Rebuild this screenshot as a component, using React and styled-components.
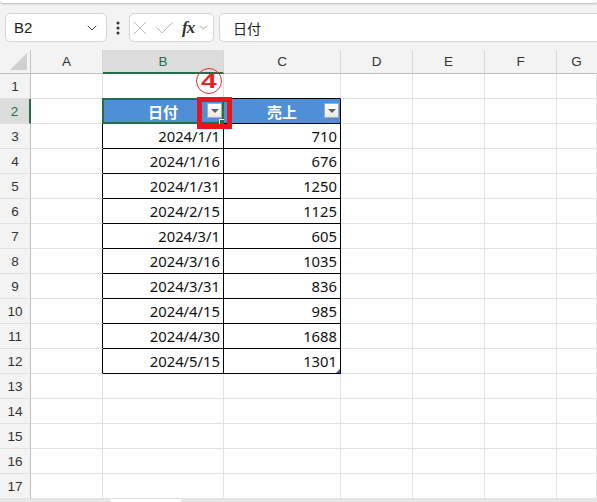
import React from 'react';
import styled, { createGlobalStyle } from 'styled-components';
import { ChevronDown, X, Check } from 'lucide-react';

const GlobalStyle = createGlobalStyle`
  html, body {
    margin: 0;
    padding: 0;
    background: #f3f3f3;
  }
  body {
    font-family: "Liberation Sans", Arial, sans-serif;
    overflow: hidden;
  }
`;

const GREEN = '#1f7145';
const GRID = '#e1e1e1';
const BLACK = '#000';

const data = [
  ['2024/1/1', 710],
  ['2024/1/16', 676],
  ['2024/1/31', 1250],
  ['2024/2/15', 1125],
  ['2024/3/1', 605],
  ['2024/3/16', 1035],
  ['2024/3/31', 836],
  ['2024/4/15', 985],
  ['2024/4/30', 1688],
  ['2024/5/15', 1301]
];

const letters = ['A', 'B', 'C', 'D', 'E', 'F', 'G'];

const Page = styled.div`
  position: relative;
  width: 597px;
  height: 502px;
  overflow: hidden;
  background: #f3f3f3;
`;

const Ribbon = styled.div`
  height: 3px;
  background: #fff;
  border-radius: 0 0 7px 7px;
  box-shadow: 0 1px 2px rgba(0, 0, 0, 0.25);
`;

const FormulaBar = styled.div`
  display: flex;
  align-items: center;
  height: 29px;
  padding: 10px 0 0 5px;
  margin-bottom: 8px;
`;

const Box = styled.div`
  display: flex;
  align-items: center;
  box-sizing: border-box;
  height: 29px;
  background: #fff;
  border: 1px solid #d4d4d4;
  width: ${p => p.$w || 'auto'};
  flex: ${p => (p.$grow ? '1' : 'none')};
  padding: ${p => p.$pad || '0'};
  margin-right: ${p => p.$mr || '0'};
  border-right: ${p => (p.$open ? 'none' : '1px solid #d4d4d4')};
  border-radius: ${p => (p.$open ? '5px 0 0 5px' : '5px')};
`;

const NameText = styled.span`
  flex: 1;
  font-size: 15px;
  color: #222;
`;

const Dots = styled.div`
  width: 22px;
  display: flex;
  justify-content: center;
`;

const Fx = styled.span`
  font-family: "Liberation Serif", "Times New Roman", serif;
  font-style: italic;
  font-weight: bold;
  font-size: 17px;
  color: #333;
  margin-left: 5px;
  letter-spacing: -1px;
`;

const FormulaText = styled.span`
  font-family: "Noto Sans CJK JP", sans-serif;
  font-size: 14px;
  color: #222;
`;

const Sheet = styled.div`
  display: grid;
  grid-template-columns: 31px 72px 121px 117px 72px 72px 72px 1fr;
  grid-auto-rows: 25px;
  grid-template-rows: 24px;
`;

const Corner = styled.div`
  box-sizing: border-box;
  border-right: 1px solid #c4c4c4;
  border-bottom: 1px solid #bdbdbd;
  display: flex;
  align-items: flex-end;
  justify-content: flex-end;
  padding: 0 3px 3px 0;
`;

const ColHead = styled.div`
  box-sizing: border-box;
  display: flex;
  align-items: center;
  justify-content: center;
  font-size: 13.5px;
  color: ${p => (p.$sel ? GREEN : '#333')};
  background: ${p => (p.$sel ? '#dcdcdc' : '#f3f3f3')};
  border-right: 1px solid ${p => (p.$last ? 'transparent' : '#d8d8d8')};
  border-bottom: ${p => (p.$sel ? `2px solid ${GREEN}` : '1px solid #bdbdbd')};
  padding-top: ${p => (p.$sel ? '1px' : '0')};
`;

const RowHead = styled.div`
  box-sizing: border-box;
  display: flex;
  align-items: center;
  justify-content: center;
  font-size: 13.5px;
  color: ${p => (p.$sel ? GREEN : '#333')};
  background: ${p => (p.$sel ? '#dcdcdc' : '#f3f3f3')};
  border-bottom: 1px solid #e1e1e1;
  border-right: ${p => (p.$sel ? `2px solid ${GREEN}` : '1px solid #bdbdbd')};
`;

const Cell = styled.div`
  position: relative;
  box-sizing: border-box;
  display: flex;
  align-items: center;
  justify-content: flex-end;
  padding-right: 3px;
  background: #fff;
  border-right: 1px solid ${p => p.$r || GRID};
  border-bottom: 1px solid ${p => p.$b || GRID};
  font-family: "Noto Sans", sans-serif;
  font-size: 14.8px;
  color: #111;
`;

const HeadCell = styled(Cell)`
  justify-content: center;
  padding-right: 0;
  background: #4f8fd7;
  color: #fff;
  font-family: "Noto Sans CJK JP", sans-serif;
  font-weight: bold;
  font-size: 15px;
`;

const Drop = styled.div`
  position: absolute;
  right: 1px;
  top: 4px;
  width: 15px;
  height: 15px;
  box-sizing: border-box;
  border: 1px solid #a9a9a9;
  background: linear-gradient(#ffffff, #e9e9e9);
  display: flex;
  align-items: center;
  justify-content: center;

  &::after {
    content: '';
    border-left: 4px solid transparent;
    border-right: 4px solid transparent;
    border-top: 4px solid #606060;
    margin-top: 1px;
  }
`;

const Selection = styled.div`
  position: absolute;
  top: -1px;
  left: -1px;
  right: -1px;
  bottom: -1px;
  border: 2px solid ${GREEN};
  pointer-events: none;
`;

const Handle = styled.div`
  position: absolute;
  right: -5px;
  bottom: -5px;
  width: 6px;
  height: 6px;
  background: ${GREEN};
  border: 1px solid #fff;
`;

const ResizeMark = styled.div`
  position: absolute;
  right: 0;
  bottom: 0;
  width: 0;
  height: 0;
  border-left: 4px solid transparent;
  border-bottom: 4px solid #3a56b0;
`;

const Tabs = styled.div`
  height: 4px;
  background: #e6e6e6;
  display: flex;
`;

const Tab = styled.div`
  margin-left: 110px;
  width: 72px;
  background: #fff;
  clip-path: polygon(0 0, 100% 0, 97% 100%, 3% 100%);
`;

const RedBox = styled.div`
  position: absolute;
  left: 197px;
  top: 97px;
  width: 35px;
  height: 32px;
  box-sizing: border-box;
  border: 5px solid #e8141e;
`;

const Circled = styled.div`
  position: absolute;
  left: 196px;
  top: 68px;
  width: 26px;
  height: 26px;
  box-sizing: border-box;
  border: 1.5px solid #f0282e;
  border-radius: 50%;
  display: flex;
  align-items: center;
  justify-content: center;
  color: #ee1c25;
  font-family: "Liberation Sans", Arial, sans-serif;
  font-weight: 900;
  font-size: 21px;

  span {
    display: inline-block;
    transform: scaleX(1.35);
  }
`;

function DotsIcon() {
  return (
    <svg width="4" height="14" viewBox="0 0 4 14">
      <circle cx="2" cy="2" r="1.5" fill="#333" />
      <circle cx="2" cy="7" r="1.5" fill="#333" />
      <circle cx="2" cy="12" r="1.5" fill="#333" />
    </svg>
  );
}

function CornerMark() {
  return (
    <svg width="17" height="17" viewBox="0 0 17 17">
      <polygon points="17,0 17,17 0,17" fill="#d0d0d0" />
    </svg>
  );
}

function BodyRow({ n }) {
  const inTable = n >= 2 && n <= 12;
  const idx = n - 3;
  const cells = [];

  cells.push(<Cell key="A" $r={inTable ? BLACK : undefined} />);

  if (n === 1) {
    cells.push(<Cell key="B" $b={BLACK} />);
    cells.push(<Cell key="C" $b={BLACK} />);
  } else if (n === 2) {
    cells.push(
      <HeadCell key="B" $r={BLACK} $b={BLACK}>
        日付
        <Drop />
        <Selection>
          <Handle />
        </Selection>
      </HeadCell>
    );
    cells.push(
      <HeadCell key="C" $r={BLACK} $b={BLACK}>
        売上
        <Drop />
      </HeadCell>
    );
  } else if (inTable) {
    cells.push(
      <Cell key="B" $r={BLACK} $b={BLACK}>
        {data[idx][0]}
      </Cell>
    );
    cells.push(
      <Cell key="C" $r={BLACK} $b={BLACK}>
        {data[idx][1]}
        {n === 12 && <ResizeMark />}
      </Cell>
    );
  } else {
    cells.push(<Cell key="B" />);
    cells.push(<Cell key="C" />);
  }

  ['D', 'E', 'F', 'G'].forEach(l => cells.push(<Cell key={l} />));

  return (
    <>
      <RowHead $sel={n === 2}>{n}</RowHead>
      {cells}
    </>
  );
}

export default function App() {
  const rowNums = Array.from({ length: 17 }, (_, i) => i + 1);
  return (
    <Page>
      <GlobalStyle />
      <Ribbon />
      <FormulaBar>
        <Box $w="102px" $pad="0 6px 0 8px">
          <NameText>B2</NameText>
          <ChevronDown size={16} strokeWidth={1.5} color="#444" />
        </Box>
        <Dots>
          <DotsIcon />
        </Dots>
        <Box $w="85px" $pad="0" $mr="5px">
          <X size={24} strokeWidth={1} color="#bcbcbc" style={{ marginLeft: '-2px' }} />
          <Check size={24} strokeWidth={1} color="#bcbcbc" style={{ marginLeft: '1px' }} />
          <Fx>fx</Fx>
          <ChevronDown size={13} strokeWidth={1.4} color="#888" style={{ marginLeft: '3px' }} />
        </Box>
        <Box $grow $open $pad="0 0 0 13px">
          <FormulaText>日付</FormulaText>
        </Box>
      </FormulaBar>
      <Sheet>
        <Corner>
          <CornerMark />
        </Corner>
        {letters.map((l, i) => (
          <ColHead key={l} $sel={l === 'B'} $last={i === letters.length - 1}>
            {l}
          </ColHead>
        ))}
        {rowNums.map(n => (
          <BodyRow key={n} n={n} />
        ))}
      </Sheet>
      <Tabs>
        <Tab />
      </Tabs>
      <Circled>
        <span>4</span>
      </Circled>
      <RedBox />
    </Page>
  );
}
